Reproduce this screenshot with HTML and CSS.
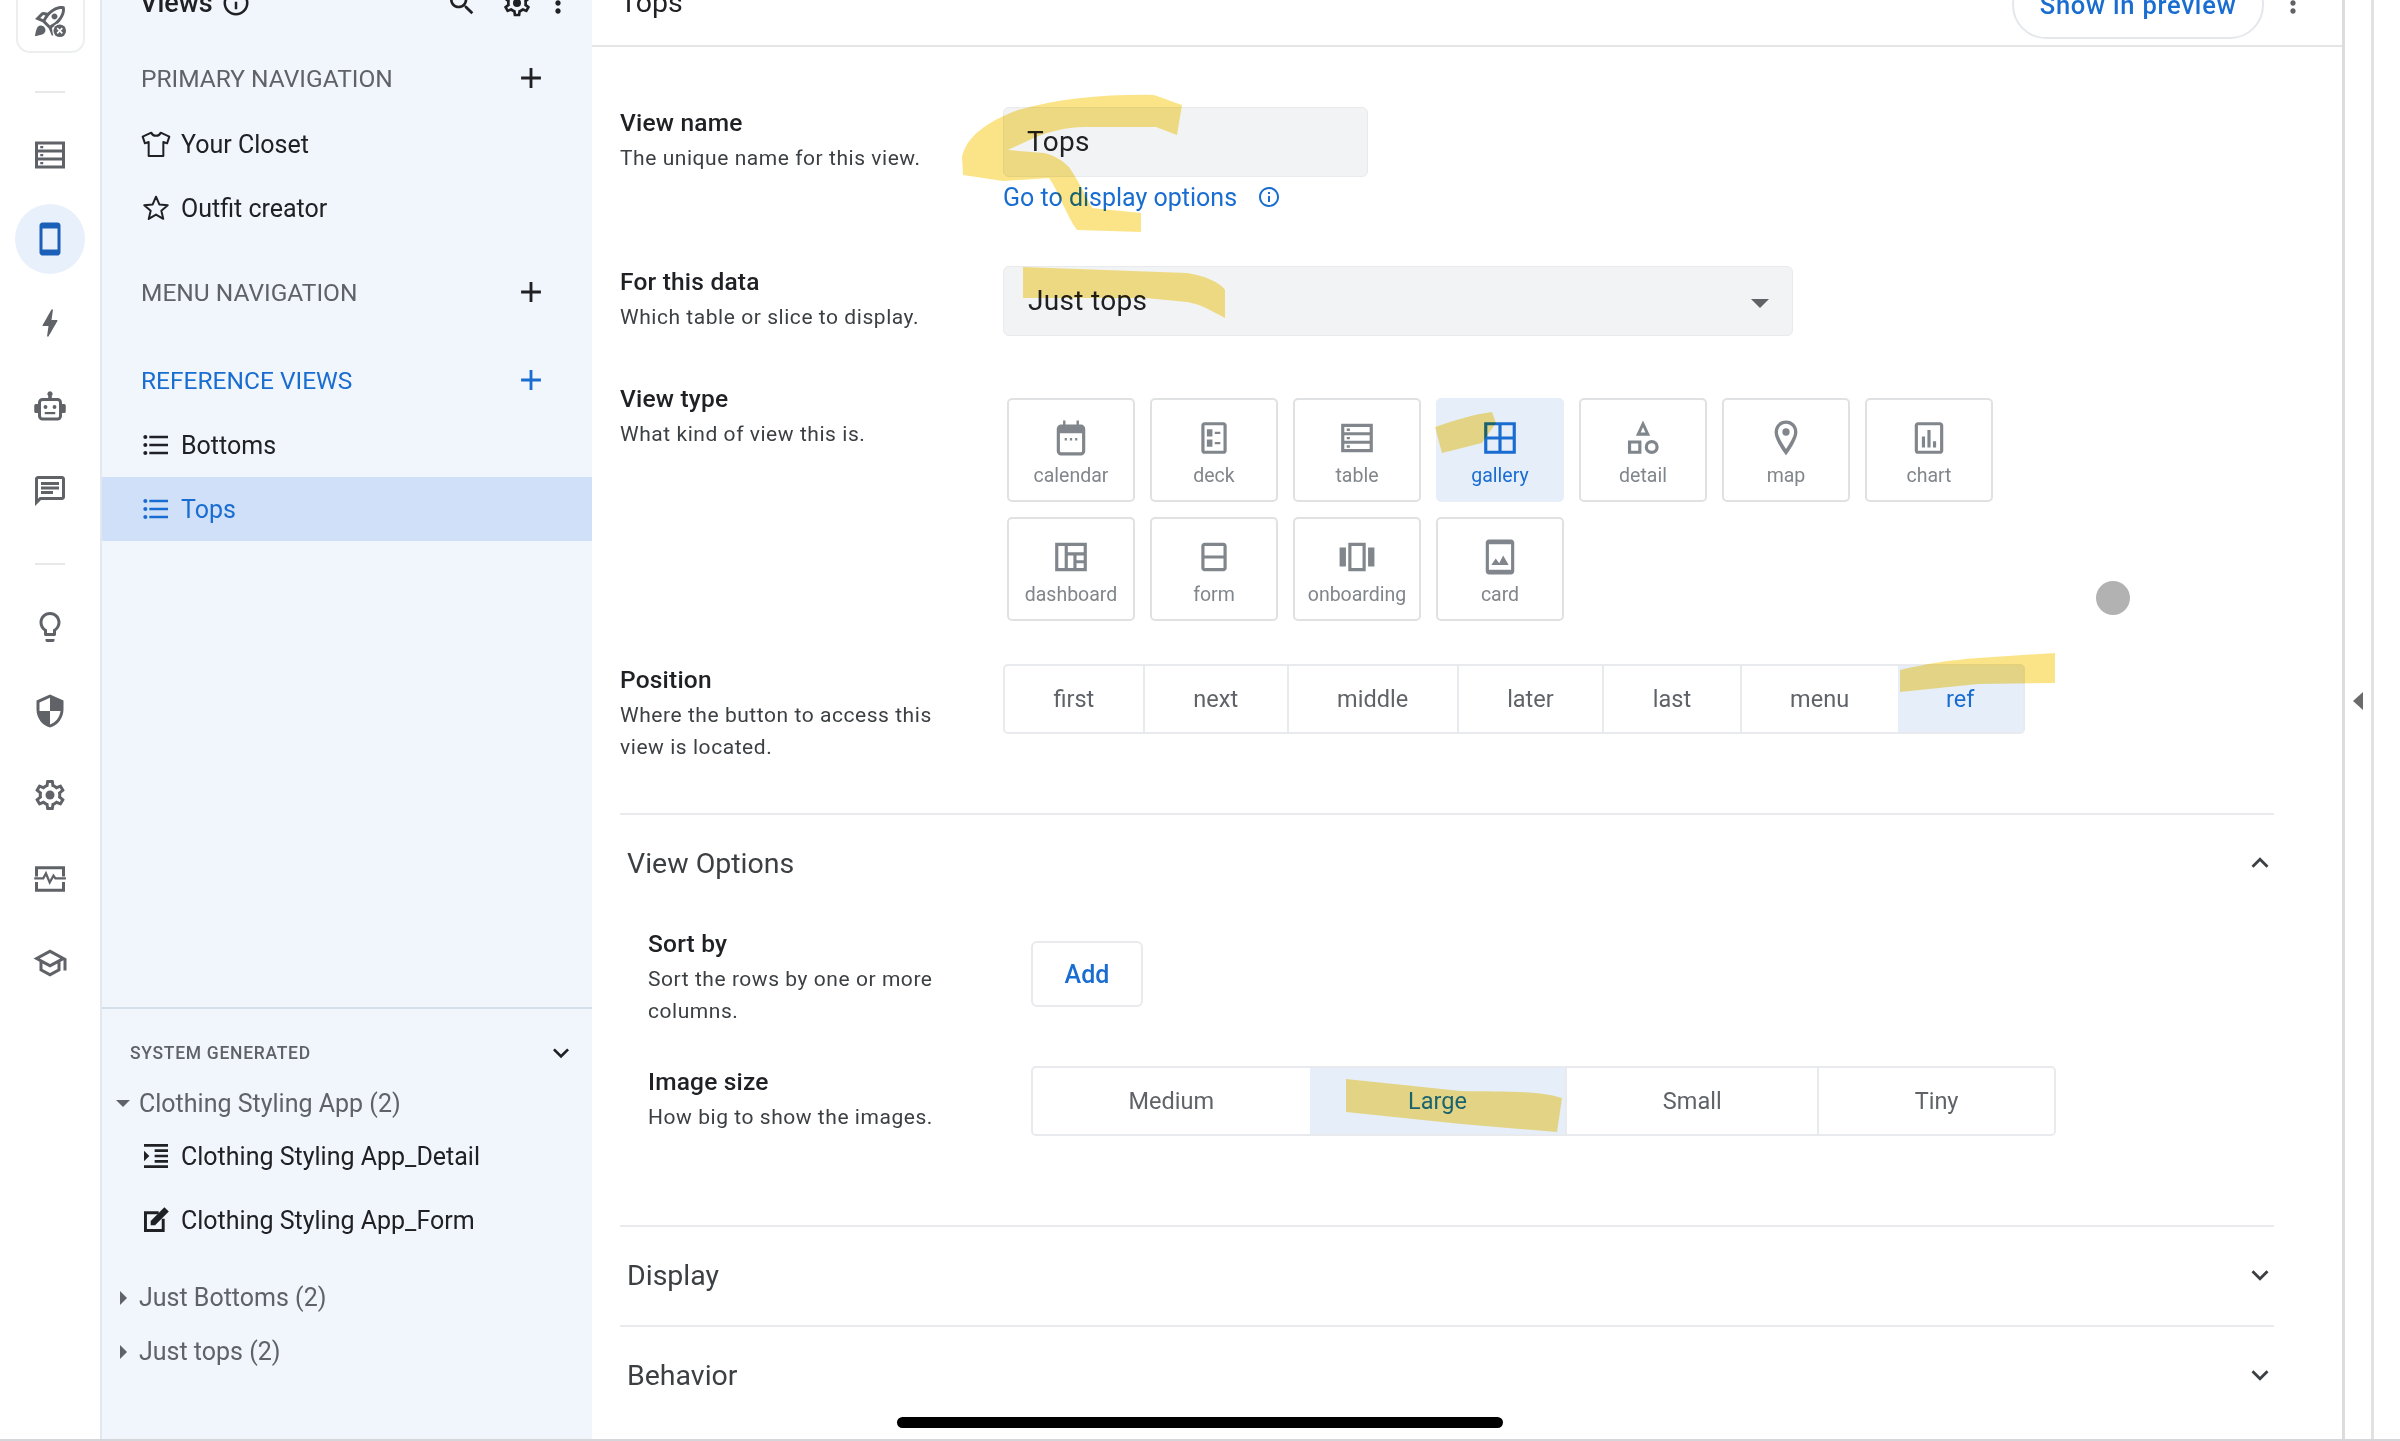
FILE: index.html
```html
<!DOCTYPE html>
<html lang="en">
<head>
    <meta charset="UTF-8">
    <title>Views - Tops</title>
    <link rel="stylesheet" href="styles.css">
</head>
<body>
    <svg class="sprite" xmlns="http://www.w3.org/2000/svg">
        <symbol id="i-add" viewBox="0 0 24 24"><path d="M19 13h-6v6h-2v-6H5v-2h6V5h2v6h6v2z"/></symbol>
        <symbol id="i-list" viewBox="0 0 24 24"><path d="M4 10.500c-.83 0-1.500.67-1.500 1.500s.67 1.500 1.500 1.500 1.500-.67 1.500-1.500-.67-1.500-1.500-1.500zm0-6c-.83 0-1.500.67-1.500 1.500S3.170 7.500 4 7.500 5.500 6.830 5.500 6 4.830 4.500 4 4.500zm0 12c-.83 0-1.500.68-1.500 1.500s.68 1.500 1.500 1.500 1.500-.68 1.500-1.500-.67-1.500-1.500-1.500zM7 19h14v-2H7v2zm0-6h14v-2H7v2zm0-8v2h14V5H7z"/></symbol>
        <symbol id="i-star" viewBox="0 0 24 24"><path fill="none" stroke="currentColor" stroke-width="1.500" stroke-linejoin="round" d="M12 3.500l2.500 5.800 6.300.55-4.800 4.150 1.450 6.150L12 16.900l-5.450 3.250L8 14 3.200 9.850l6.300-.55z"/></symbol>
        <symbol id="i-shirt" viewBox="0 0 24 24"><path fill="none" stroke="currentColor" stroke-width="1.500" stroke-linejoin="round" d="M8.500 3.500 2 6.500l1.700 5 2.800-1V21h11V10.500l2.800 1 1.700-5-6.500-3c-.5 1.600-1.700 2.400-3.500 2.400s-3-.8-3.500-2.400z"/></symbol>
        <symbol id="i-search" viewBox="0 0 24 24"><path d="M15.500 14h-.79l-.28-.27C15.410 12.590 16 11.110 16 9.500 16 5.910 13.090 3 9.500 3S3 5.910 3 9.500 5.910 16 9.500 16c1.610 0 3.090-.59 4.230-1.570l.27.28v.79l5 4.990L20.490 19l-4.990-5zm-6 0C7.010 14 5 11.990 5 9.500S7.010 5 9.500 5 14 7.010 14 9.500 11.990 14 9.500 14z"/></symbol>
        <symbol id="i-more" viewBox="0 0 24 24"><path d="M12 8c1.100 0 2-.9 2-2s-.9-2-2-2-2 .9-2 2 .9 2 2 2zm0 2c-1.100 0-2 .9-2 2s.9 2 2 2 2-.9 2-2-.9-2-2-2zm0 6c-1.100 0-2 .9-2 2s.9 2 2 2 2-.9 2-2-.9-2-2-2z"/></symbol>
        <symbol id="i-gear" viewBox="0 0 24 24"><path d="M19.430 12.980c.04-.32.07-.64.07-.98 0-.34-.03-.66-.07-.98l2.110-1.650c.19-.15.24-.42.12-.64l-2-3.460c-.09-.16-.26-.25-.44-.25-.06 0-.12.01-.17.03l-2.490 1c-.52-.4-1.080-.73-1.690-.98l-.38-2.650C14.460 2.180 14.250 2 14 2h-4c-.25 0-.46.18-.49.42l-.38 2.650c-.61.25-1.170.59-1.690.98l-2.490-1c-.06-.02-.12-.03-.18-.03-.17 0-.34.09-.43.25l-2 3.460c-.13.22-.07.49.12.64l2.110 1.650c-.04.32-.07.65-.07.98 0 .33.03.66.07.98l-2.110 1.650c-.19.15-.24.42-.12.64l2 3.460c.09.16.26.25.44.25.06 0 .12-.01.17-.03l2.490-1c.52.4 1.080.73 1.690.98l.38 2.650c.03.24.24.42.49.42h4c.25 0 .46-.18.49-.42l.38-2.650c.61-.25 1.170-.59 1.690-.98l2.490 1c.06.02.12.03.18.03.17 0 .34-.09.43-.25l2-3.460c.12-.22.07-.49-.12-.64l-2.110-1.650zm-1.980-1.710c.04.31.05.52.05.73 0 .21-.02.43-.05.73l-.14 1.130.89.7 1.080.84-.7 1.210-1.270-.51-1.040-.42-.9.68c-.43.32-.84.56-1.250.73l-1.060.43-.16 1.130-.2 1.350h-1.400l-.19-1.350-.16-1.130-1.060-.43c-.43-.18-.83-.41-1.230-.71l-.91-.7-1.060.43-1.270.51-.7-1.210 1.080-.84.89-.7-.14-1.130c-.03-.31-.05-.54-.05-.74s.02-.43.05-.73l.14-1.130-.89-.7-1.080-.84.7-1.210 1.270.51 1.040.42.9-.68c.43-.32.84-.56 1.250-.73l1.060-.43.16-1.130.2-1.350h1.390l.19 1.350.16 1.130 1.060.43c.43.18.83.41 1.230.71l.91.7 1.060-.43 1.270-.51.7 1.210-1.070.85-.89.7.14 1.130z"/><circle cx="12" cy="12" r="3"/></symbol>
        <symbol id="i-info" viewBox="0 0 24 24"><path d="M11 7h2v2h-2zm0 4h2v6h-2zm1-9C6.480 2 2 6.480 2 12s4.480 10 10 10 10-4.480 10-10S17.520 2 12 2zm0 18c-4.410 0-8-3.590-8-8s3.590-8 8-8 8 3.590 8 8-3.590 8-8 8z"/></symbol>
        <symbol id="i-down" viewBox="0 0 24 24"><path d="M16.590 8.590 12 13.170 7.410 8.590 6 10l6 6 6-6z"/></symbol>
        <symbol id="i-up" viewBox="0 0 24 24"><path d="M12 8l-6 6 1.410 1.410L12 10.830l4.590 4.580L18 14z"/></symbol>
        <symbol id="i-rocket" viewBox="0 0 24 24"><path d="M6 15c-.83 0-1.580.34-2.120.88C2.700 17.060 2 22 2 22s4.940-.7 6.120-1.880A3 3 0 0 0 6 15zm11.420-1.350c6.360-6.360 4.240-11.310 4.240-11.310S16.710.22 10.350 6.580l-2.490-.5a2.070 2.070 0 0 0-1.870.56L2 10.640l5 2.140L11.220 17l2.140 5 3.980-3.980c.46-.46.67-1.130.56-1.870zM7.410 10.830l-1.910-.82 1.970-1.970 1.440.29c-.57.83-1.080 1.700-1.500 2.500zm6.580 7.670-.82-1.910c.8-.42 1.670-.93 2.490-1.500l.29 1.440zM16 12.240c-1.320 1.320-3.380 2.400-4.040 2.730l-2.930-2.930c.32-.65 1.400-2.710 2.730-4.040 4.680-4.680 8.230-3.930 8.230-3.930s.75 3.550-3.990 8.170zM15 11c1.100 0 2-.9 2-2s-.9-2-2-2-2 .9-2 2 .9 2 2 2z"/><circle cx="18.500" cy="18.500" r="5" fill="#fff"/><circle cx="18.500" cy="18.500" r="4.200"/><path d="M16.800 16.800l3.400 3.400m0-3.400-3.400 3.400" stroke="#fff" stroke-width="1.100"/></symbol>
        <symbol id="i-table" viewBox="0 0 24 24"><path d="M2 3h20v18H2zm2 2v3.300h16V5zm0 5.300v3.400h16v-3.400zm0 5.400V19h16v-3.300z"/><path d="M5.500 6h2v1.500h-2zm0 5.300h2v1.500h-2zm0 5.300h2v1.500h-2z"/></symbol>
        <symbol id="i-phone" viewBox="0 0 24 24"><path d="M17 1.010 7 1c-1.100 0-2 .9-2 2v18c0 1.100.9 2 2 2h10c1.100 0 2-.9 2-2V3c0-1.100-.9-1.990-2-1.990zM17 19H7V5h10v14z"/></symbol>
        <symbol id="i-bolt" viewBox="0 0 24 24"><path d="M11 21h-1l1-7H7.500c-.58 0-.57-.32-.38-.66.19-.34.05-.08.07-.12C8.480 10.940 10.420 7.540 13 3h1l-1 7h3.500c.49 0 .56.33.47.51l-.07.15C12.960 17.550 11 21 11 21z"/></symbol>
        <symbol id="i-robot" viewBox="0 0 24 24"><path d="M12 1.500a1.800 1.800 0 0 0-1.200 3.100V6H7a3 3 0 0 0-3 3v1H2.500a1 1 0 0 0-1 1v4a1 1 0 0 0 1 1H4v2a3 3 0 0 0 3 3h10a3 3 0 0 0 3-3v-2h1.500a1 1 0 0 0 1-1v-4a1 1 0 0 0-1-1H20V9a3 3 0 0 0-3-3h-3.800V4.600A1.800 1.800 0 0 0 12 1.500zM7 8h10a1 1 0 0 1 1 1v9a1 1 0 0 1-1 1H7a1 1 0 0 1-1-1V9a1 1 0 0 1 1-1z"/><circle cx="9" cy="12" r="1.300"/><circle cx="15" cy="12" r="1.300"/><path d="M8.500 15.300h7v1.500h-7z"/></symbol>
        <symbol id="i-chat" viewBox="0 0 24 24"><path d="M20 2H4c-1.100 0-2 .9-2 2v18l4-4h14c1.100 0 2-.9 2-2V4c0-1.100-.9-2-2-2zm0 14H5.170L4 17.170V4h16v12zM6 12h8v2H6zm0-3h12v2H6zm0-3h12v2H6z"/></symbol>
        <symbol id="i-bulb" viewBox="0 0 24 24"><path d="M9 21c0 .5.4 1 1 1h4c.6 0 1-.5 1-1v-1H9v1zm3-19C8.100 2 5 5.100 5 9c0 2.400 1.200 4.500 3 5.700V17c0 .5.4 1 1 1h6c.6 0 1-.5 1-1v-2.300c1.800-1.300 3-3.400 3-5.700 0-3.900-3.100-7-7-7zm2.900 11.100-.9.6V16h-4v-2.300l-.9-.6C7.800 12.200 7 10.600 7 9c0-2.800 2.200-5 5-5s5 2.200 5 5c0 1.600-.8 3.200-2.100 4.100z"/></symbol>
        <symbol id="i-shield" viewBox="0 0 24 24"><path d="M12 1 3 5v6c0 5.550 3.840 10.740 9 12 5.160-1.260 9-6.450 9-12V5l-9-4zm0 10.990h7c-.53 4.120-3.280 7.790-7 8.940V12H5V6.300l7-3.110v8.800z"/></symbol>
        <symbol id="i-monitor" viewBox="0 0 24 24"><path d="M2 3.500h20v6.800h-2V5.500H4v4.800H2zm0 10.500h2v4.500h16V14h2v6.500H2z"/><path d="M1.500 11.600h6l1.800-3.300 2.500 6 2.500-4.500 1.300 1.800h7" fill="none" stroke="currentColor" stroke-width="1.500"/></symbol>
        <symbol id="i-school" viewBox="0 0 24 24"><path d="M12 3 1 9l4 2.180v6L12 21l7-3.820v-6l2-1.090V17h2V9L12 3zm6.820 6L12 12.720 5.180 9 12 5.280 18.820 9zM17 15.990l-5 2.730-5-2.730v-3.720L12 15l5-2.730v3.720z"/></symbol>
        <symbol id="i-indent" viewBox="0 0 24 24"><path d="M3 21h18v-2H3v2zM3 8v8l4-4-4-4zm8 9h10v-2H11v2zM3 3v2h18V3H3zm8 6h10V7H11v2zm0 4h10v-2H11v2z"/></symbol>
        <symbol id="i-edit" viewBox="0 0 24 24"><path d="M3 5.500h11v2.200H5.200v11.100h11.100V11h2.200v10H3z"/><path d="M8 16v-3.300L18.300 2.400l3.300 3.300L11.300 16z"/></symbol>
        <symbol id="i-calendar" viewBox="0 0 24 24"><path d="M7 1h1.500v2.500h7V1H17v2.500h1c1.700 0 3 1.300 3 3V20c0 1.700-1.300 3-3 3H6c-1.700 0-3-1.300-3-3V6.500c0-1.700 1.300-3 3-3h1zM5 9v11c0 .6.4 1 1 1h12c.6 0 1-.4 1-1V9z"/><path d="M8 12h1.400v1.500H8zm3.300 0h1.400v1.500h-1.400zm3.300 0H16v1.500h-1.400z"/></symbol>
        <symbol id="i-deck" viewBox="0 0 24 24"><path d="M6 2h12c1.100 0 2 .9 2 2v16c0 1.100-.9 2-2 2H6c-1.100 0-2-.9-2-2V4c0-1.100.9-2 2-2zm0 2v16h12V4z"/><path d="M7.500 6.500h3.500V11H7.500zm0 6.500h3.500v4.500H7.500zM12.500 8H16v1.500h-3.500zm0 6.500H16V16h-3.500z"/></symbol>
        <symbol id="i-gallery" viewBox="0 0 24 24"><path d="M2 2h20v20H2zm2 2v7h7V4zm9 0v7h7V4zM4 13v7h7v-7zm9 0v7h7v-7z"/></symbol>
        <symbol id="i-detail" viewBox="0 0 24 24"><path d="M12 1l4.500 9.500h-9zm0 4.200-1.500 3.300h3zM2.500 13.500h8.500V22H2.500zm2 2V20H9v-4.500zM17.500 13.300a4.400 4.400 0 1 1 0 8.800 4.400 4.400 0 0 1 0-8.800zm0 2a2.400 2.400 0 1 0 0 4.800 2.400 2.400 0 0 0 0-4.800z"/></symbol>
        <symbol id="i-pin" viewBox="0 0 24 24"><path d="M12 1C7.900 1 4.800 4.100 4.800 8.200 4.800 13.700 12 23 12 23s7.200-9.300 7.200-14.800C19.200 4.100 16.100 1 12 1zM6.900 8.200C6.900 5.300 9.100 3 12 3s5.100 2.300 5.100 5.200c0 3-2.900 7.500-5.100 10.700C9.900 15.700 6.900 11.200 6.900 8.200z"/><circle cx="12" cy="8.200" r="2.300"/></symbol>
        <symbol id="i-chart" viewBox="0 0 24 24"><path d="M19 2H5C3.900 2 3 2.900 3 4v16c0 1.100.9 2 2 2h14c1.100 0 2-.9 2-2V4c0-1.100-.9-2-2-2zm0 18H5V4h14zM7.500 11h2v7h-2zm3.500-4h2v11h-2zm3.500 7h2v4h-2z"/></symbol>
        <symbol id="i-dashboard" viewBox="0 0 24 24"><path d="M2 3h20v18H2zm2 2v14h4V5zm6 0v4h10V5zm0 6v8h3.500v-8zm5.500 0v3H20v-3zm0 5v3H20v-3z"/></symbol>
        <symbol id="i-form" viewBox="0 0 24 24"><path d="M6 3h12c1.100 0 2 .9 2 2v14c0 1.100-.9 2-2 2H6c-1.100 0-2-.9-2-2V5c0-1.100.9-2 2-2zm0 2v6h12V5zm0 8v6h12v-6z"/></symbol>
        <symbol id="i-carousel" viewBox="0 0 24 24"><path d="M1 6h4v12H1zm18 0h4v12h-4zM6.500 3h11v18h-11zm2 2v14h7V5z"/></symbol>
        <symbol id="i-card" viewBox="0 0 24 24"><path d="M5 1h14c1.100 0 2 .9 2 2v18c0 1.100-.9 2-2 2H5c-1.100 0-2-.9-2-2V3c0-1.100.9-2 2-2zm0 3v16h14V4z"/><path d="M6.500 17l2.800-4 2.200 3 2.500-5 3.500 6z"/></symbol>
    </svg>

    <div class="app">
        <nav class="rail">
            <div class="rail-logo"><svg class="rail-icon logo-icon"><use href="#i-rocket"/></svg></div>
            <div class="rail-line"></div>
            <div class="rail-item"><svg class="rail-icon"><use href="#i-table"/></svg></div>
            <div class="rail-item rail-active"><span class="rail-circle"><svg class="rail-icon"><use href="#i-phone"/></svg></span></div>
            <div class="rail-item"><svg class="rail-icon"><use href="#i-bolt"/></svg></div>
            <div class="rail-item"><svg class="rail-icon"><use href="#i-robot"/></svg></div>
            <div class="rail-item"><svg class="rail-icon"><use href="#i-chat"/></svg></div>
            <div class="rail-line rail-line-2"></div>
            <div class="rail-item"><svg class="rail-icon"><use href="#i-bulb"/></svg></div>
            <div class="rail-item"><svg class="rail-icon"><use href="#i-shield"/></svg></div>
            <div class="rail-item"><svg class="rail-icon"><use href="#i-gear"/></svg></div>
            <div class="rail-item"><svg class="rail-icon"><use href="#i-monitor"/></svg></div>
            <div class="rail-item"><svg class="rail-icon"><use href="#i-school"/></svg></div>
        </nav>

        <aside class="views-panel">
            <div class="views-top">
                <div class="views-head">
                    <span class="views-title">Views</span>
                    <svg class="head-info"><use href="#i-info"/></svg>
                    <svg class="head-search"><use href="#i-search"/></svg>
                    <svg class="head-gear"><use href="#i-gear"/></svg>
                    <svg class="head-more"><use href="#i-more"/></svg>
                </div>

                <div class="group-title group-primary">PRIMARY NAVIGATION <svg class="add-icon"><use href="#i-add"/></svg></div>
                <div class="view-item"><svg class="item-icon"><use href="#i-shirt"/></svg>Your Closet</div>
                <div class="view-item"><svg class="item-icon"><use href="#i-star"/></svg>Outfit creator</div>

                <div class="group-title group-menu">MENU NAVIGATION <svg class="add-icon"><use href="#i-add"/></svg></div>

                <div class="group-title group-ref">REFERENCE VIEWS <svg class="add-icon"><use href="#i-add"/></svg></div>
                <div class="view-item"><svg class="item-icon"><use href="#i-list"/></svg>Bottoms</div>
                <div class="view-item selected"><svg class="item-icon"><use href="#i-list"/></svg>Tops</div>
            </div>

            <div class="system">
                <div class="system-title">SYSTEM GENERATED <svg class="system-chevron"><use href="#i-down"/></svg></div>
                <div class="tree-head tree-first"><span class="caret caret-open"></span>Clothing Styling App (2)</div>
                <div class="view-item tree-child"><svg class="item-icon"><use href="#i-indent"/></svg>Clothing Styling App_Detail</div>
                <div class="view-item"><svg class="item-icon"><use href="#i-edit"/></svg>Clothing Styling App_Form</div>
                <div class="tree-head tree-second"><span class="caret"></span>Just Bottoms (2)</div>
                <div class="tree-head tree-third"><span class="caret"></span>Just tops (2)</div>
            </div>
        </aside>

        <main class="editor">
            <header class="editor-head">
                <span class="editor-title">Tops</span>
                <button class="preview-btn">Show in preview</button>
                <svg class="editor-more"><use href="#i-more"/></svg>
            </header>

            <div class="editor-body">
                <div class="form-row row-name">
                    <div class="field-label">
                        <div class="field-name">View name</div>
                        <div class="field-desc">The unique name for this view.</div>
                    </div>
                    <div>
                        <div class="text-box name-box">Tops</div>
                        <div class="display-link">Go to display options <svg class="link-info"><use href="#i-info"/></svg></div>
                    </div>
                </div>

                <div class="form-row row-data">
                    <div class="field-label">
                        <div class="field-name">For this data</div>
                        <div class="field-desc">Which table or slice to display.</div>
                    </div>
                    <div class="text-box data-box">Just tops <span class="select-arrow"></span></div>
                </div>

                <div class="form-row row-type">
                    <div class="field-label">
                        <div class="field-name">View type</div>
                        <div class="field-desc">What kind of view this is.</div>
                    </div>
                    <div class="type-grid">
                        <div class="type-tile"><svg class="tile-icon"><use href="#i-calendar"/></svg>calendar</div>
                        <div class="type-tile"><svg class="tile-icon"><use href="#i-deck"/></svg>deck</div>
                        <div class="type-tile"><svg class="tile-icon"><use href="#i-table"/></svg>table</div>
                        <div class="type-tile tile-on"><svg class="tile-icon"><use href="#i-gallery"/></svg>gallery</div>
                        <div class="type-tile"><svg class="tile-icon"><use href="#i-detail"/></svg>detail</div>
                        <div class="type-tile"><svg class="tile-icon"><use href="#i-pin"/></svg>map</div>
                        <div class="type-tile"><svg class="tile-icon"><use href="#i-chart"/></svg>chart</div>
                        <div class="type-tile"><svg class="tile-icon"><use href="#i-dashboard"/></svg>dashboard</div>
                        <div class="type-tile"><svg class="tile-icon"><use href="#i-form"/></svg>form</div>
                        <div class="type-tile"><svg class="tile-icon"><use href="#i-carousel"/></svg>onboarding</div>
                        <div class="type-tile"><svg class="tile-icon"><use href="#i-card"/></svg>card</div>
                    </div>
                </div>

                <div class="form-row row-position">
                    <div class="field-label">
                        <div class="field-name">Position</div>
                        <div class="field-desc">Where the button to access this<br>view is located.</div>
                    </div>
                    <div class="segments">
                        <div class="segment">first</div>
                        <div class="segment">next</div>
                        <div class="segment">middle</div>
                        <div class="segment">later</div>
                        <div class="segment">last</div>
                        <div class="segment">menu</div>
                        <div class="segment segment-on">ref</div>
                    </div>
                </div>

                <section class="panel panel-open">
                    <div class="panel-head">View Options <svg class="panel-chevron"><use href="#i-up"/></svg></div>
                    <div class="form-row row-sort">
                        <div class="field-label">
                            <div class="field-name">Sort by</div>
                            <div class="field-desc">Sort the rows by one or more<br>columns.</div>
                        </div>
                        <button class="add-btn">Add</button>
                    </div>
                    <div class="form-row row-size">
                        <div class="field-label">
                            <div class="field-name">Image size</div>
                            <div class="field-desc">How big to show the images.</div>
                        </div>
                        <div class="segments size-segments">
                            <div class="segment">Medium</div>
                            <div class="segment segment-on">Large</div>
                            <div class="segment">Small</div>
                            <div class="segment">Tiny</div>
                        </div>
                    </div>
                </section>

                <section class="panel">
                    <div class="panel-head">Display <svg class="panel-chevron"><use href="#i-down"/></svg></div>
                </section>
                <section class="panel">
                    <div class="panel-head">Behavior <svg class="panel-chevron"><use href="#i-down"/></svg></div>
                </section>
            </div>
        </main>

        <div class="collapse-strip"><span class="collapse-arrow"></span></div>
        <div class="page-edge"></div>
    </div>

    <!-- marker strokes drawn on top of the screenshot -->
    <svg class="marker" viewBox="0 0 2400 1441" xmlns="http://www.w3.org/2000/svg">
        <path d="M1182 105 1154 95C1110 94 1060 98 1018 110 985 122 966 138 962 157L963 175 1003 181 1049 178C1058 190 1066 215 1077 230L1141 232V213L1092 208C1085 195 1078 180 1069 167 1060 158 1052 155 1044 153L1008 150 1023 143C1045 132 1065 127 1085 127H1156L1177 135z"/>
        <path d="M1023 267 1187 273C1205 276 1220 282 1225 290V318C1210 310 1200 304 1187 302L1146 298 1023 298z"/>
        <path d="M1435 427C1455 420 1475 414 1492 412L1496 423 1482 443 1442 453z"/>
        <path d="M1900 670C1925 664 1950 660 1978 658L2055 653V683L1978 684 1900 692z"/>
        <path d="M1346 1079 1461 1091C1500 1092 1540 1090 1562 1098L1557 1132 1461 1124 1346 1112z"/>
    </svg>
    <div class="touch-dot"></div>
    <div class="home-bar"></div>
</body>
</html>
```

FILE: styles.css
```css
* {
    box-sizing: border-box;
}
html, body {
    margin: 0;
    height: 100%;
    overflow: hidden;
    background: #fff;
}
body {
    font-family: Roboto, "Liberation Sans", sans-serif;
    color: #202124;
}
svg {
    fill: currentColor;
    display: block;
    flex: none;
}
.sprite {
    width: 0;
    height: 0;
    position: absolute;
}
.app {
    display: flex;
    height: 1441px;
    border-bottom: 2px solid #d4d6d9;
    overflow: hidden;
}

/* left icon rail */
.rail {
    width: 100px;
    flex: none;
    display: flex;
    flex-direction: column;
    align-items: center;
    color: #5f6368;
}
.rail-logo {
    width: 69px;
    height: 93px;
    margin-top: -40px;
    padding-top: 41px;
    border: 2px solid #eceef0;
    border-radius: 14px;
    display: flex;
    justify-content: center;
}
.logo-icon {
    width: 32px;
    height: 32px;
}
.rail-line {
    width: 30px;
    height: 2px;
    background: #e6e8ea;
    margin: 38px 0 20px;
}
.rail-line-2 {
    margin: 30px 0 20px;
}
.rail-item {
    height: 84px;
    flex: none;
    display: flex;
    align-items: center;
    justify-content: center;
}
.rail-icon {
    width: 36px;
    height: 36px;
}
.rail-circle {
    width: 70px;
    height: 70px;
    border-radius: 50%;
    background: #e8f0fb;
    color: #1c5fb8;
    display: flex;
    align-items: center;
    justify-content: center;
}

/* views list */
.views-panel {
    width: 492px;
    flex: none;
    background: #f1f5fc;
    border-left: 2px solid #e3e7ee;
    display: flex;
    flex-direction: column;
}
.views-top {
    flex: 1;
}
.views-head {
    height: 86px;
    margin-top: -40px;
    padding-left: 38px;
    display: flex;
    align-items: center;
    position: relative;
}
.views-title {
    font-size: 27px;
    font-weight: 500;
}
.head-info {
    width: 30px;
    height: 30px;
    margin-left: 8px;
}
.head-search {
    width: 32px;
    height: 32px;
    margin-left: 195px;
}
.head-gear {
    width: 32px;
    height: 32px;
    margin-left: 23px;
}
.head-more {
    width: 32px;
    height: 32px;
    margin-left: 9px;
}
.group-title {
    height: 64px;
    padding: 0 44px 0 39px;
    display: flex;
    align-items: center;
    justify-content: space-between;
    font-size: 24.5px;
    color: #5f6368;
}
.group-primary {
    height: 66px;
    padding-bottom: 2px;
}
.group-menu {
    margin-top: 20px;
}
.group-ref {
    margin-top: 24px;
    height: 65px;
    padding-bottom: 1px;
    color: #1a6dd0;
}
.add-icon {
    width: 34px;
    height: 34px;
    color: #202124;
}
.group-ref .add-icon {
    color: #1a6dd0;
}
.view-item {
    height: 64px;
    padding-left: 38px;
    display: flex;
    align-items: center;
    font-size: 25px;
}
.view-item.selected {
    background: #cfe0f8;
    color: #1a6dd0;
}
.item-icon {
    width: 32px;
    height: 32px;
    margin-right: 9px;
}
.system {
    height: 432px;
    flex: none;
    border-top: 2px solid #d5dfec;
    padding-top: 28px;
}
.system-title {
    padding: 0 15px 0 28px;
    height: 32px;
    display: flex;
    align-items: center;
    justify-content: space-between;
    font-size: 17.5px;
    font-weight: 500;
    letter-spacing: .7px;
    color: #5f6368;
}
.system-chevron {
    width: 32px;
    height: 32px;
    color: #202124;
}
.tree-head {
    height: 50px;
    padding-left: 37px;
    display: flex;
    align-items: center;
    font-size: 25px;
    color: #5f6368;
    position: relative;
}
.tree-first {
    margin-top: 9px;
}
.tree-child {
    margin-top: -4px;
}
.tree-second {
    margin-top: 20px;
}
.tree-third {
    margin-top: 4px;
}
.caret {
    position: absolute;
    left: 18px;
    top: 19px;
    border-left: 7px solid #5f6368;
    border-top: 7px solid transparent;
    border-bottom: 7px solid transparent;
}
.caret-open {
    left: 14px;
    top: 22px;
    border-top: 7px solid #5f6368;
    border-left: 7px solid transparent;
    border-right: 7px solid transparent;
    border-bottom: 0;
}

/* editor */
.editor {
    width: 1753px;
    flex: none;
    border-right: 3px solid #dcdcdc;
}
.editor-head {
    height: 87px;
    margin-top: -40px;
    padding-left: 28px;
    border-bottom: 2px solid #e4e5e7;
    display: flex;
    align-items: center;
    position: relative;
}
.editor-title {
    font-size: 28.5px;
}
.preview-btn {
    margin-left: auto;
    margin-right: 13px;
    width: 252px;
    height: 68px;
    margin-top: 4px;
    background: #fff;
    border: 2px solid #e4e7eb;
    border-radius: 34px;
    font-family: inherit;
    font-size: 25.5px;
    font-weight: 500;
    letter-spacing: .8px;
    color: #1a6dd0;
}
.editor-more {
    width: 32px;
    height: 32px;
    margin-right: 33px;
    color: #5f6368;
}
.editor-body {
    padding: 60px 68px 0 28px;
}
.form-row {
    display: grid;
    grid-template-columns: 383px 1fr;
    align-items: start;
}
.field-name {
    font-size: 24.5px;
    font-weight: 500;
    line-height: 32px;
    letter-spacing: .2px;
}
.field-desc {
    font-size: 21px;
    line-height: 32px;
    margin-top: 3px;
    letter-spacing: .55px;
    color: #3c4043;
}
.text-box {
    height: 70px;
    background: #f1f3f4;
    border: 1px solid #e8eaed;
    border-radius: 6px;
    display: flex;
    align-items: center;
    padding: 0 0 2px 23px;
    font-size: 28px;
    letter-spacing: .3px;
}
.name-box {
    width: 365px;
}
.data-box {
    width: 790px;
    position: relative;
    padding-left: 24px;
}
.select-arrow {
    position: absolute;
    right: 23px;
    top: 32px;
    border-top: 9px solid #5f6368;
    border-left: 9px solid transparent;
    border-right: 9px solid transparent;
}
.display-link {
    height: 40px;
    display: flex;
    align-items: center;
    font-size: 25px;
    color: #1a6dd0;
}
.link-info {
    width: 24px;
    height: 24px;
    margin-left: 20px;
}
.row-data {
    margin-top: 49px;
}
.row-type {
    margin-top: 47px;
}
.row-position {
    margin-top: 43px;
}
.type-grid {
    margin: 15px 0 0 4px;
    display: grid;
    grid-template-columns: repeat(7, 128px);
    grid-auto-rows: 104px;
    gap: 15px;
}
.type-tile {
    border: 2px solid #e0e1e3;
    border-radius: 5px;
    display: flex;
    flex-direction: column;
    align-items: center;
    padding-top: 19px;
    font-size: 19.5px;
    color: #80868b;
}
.tile-icon {
    width: 38px;
    height: 38px;
    margin-bottom: 7px;
}
.tile-on {
    background: #e6eefa;
    border-color: #e6eefa;
    color: #1a6dd0;
}
.segments {
    display: inline-flex;
    justify-self: start;
    height: 70px;
    border: 2px solid #e8eaed;
    border-radius: 5px;
}
.segment {
    display: flex;
    align-items: center;
    padding: 0 48.5px;
    font-size: 23.5px;
    color: #5f6368;
    border-left: 2px solid #e8eaed;
}
.segment:first-child {
    border-left: 0;
}
.segment-on {
    background: #e6eefa;
    color: #1a6dd0;
    border-left: 0;
}
.panel {
    border-top: 2px solid #e8eaed;
}
.panel-open {
    margin-top: 50px;
    height: 412px;
}
.panel-head {
    height: 98px;
    padding: 0 0 2px 7px;
    display: flex;
    align-items: center;
    justify-content: space-between;
    font-size: 28.5px;
    color: #3c4043;
}
.panel-chevron {
    width: 34px;
    height: 34px;
    color: #3c4043;
    margin-right: -3px;
}
.row-sort {
    padding-left: 28px;
    margin-top: 15px;
}
.add-btn {
    width: 112px;
    height: 66px;
    margin-top: 13px;
    background: #fff;
    border: 2px solid #e8eaed;
    border-radius: 6px;
    font-family: inherit;
    font-size: 25px;
    font-weight: 500;
    color: #1a6dd0;
}
.row-size {
    padding-left: 28px;
    margin-top: 39px;
}
.size-segments .segment {
    padding: 0 95.5px;
}
.size-segments .segment-on {
    padding: 0 98.5px;
}

/* strip on the right of the editor */
.collapse-strip {
    width: 26px;
    flex: none;
    display: flex;
    align-items: center;
    justify-content: center;
    padding-bottom: 37px;
}
.collapse-arrow {
    border-right: 10px solid #6b6b6b;
    border-top: 9px solid transparent;
    border-bottom: 9px solid transparent;
}
.page-edge {
    flex: 1;
    border-left: 3px solid #e2e2e2;
}

/* things lying over the page */
.marker {
    position: absolute;
    left: 0;
    top: 0;
    width: 2400px;
    height: 1441px;
    fill: #fbe072;
    opacity: .85;
    mix-blend-mode: multiply;
    pointer-events: none;
}
.touch-dot {
    position: absolute;
    left: 2096px;
    top: 581px;
    width: 34px;
    height: 34px;
    border-radius: 50%;
    background: #b2b2b2;
}
.home-bar {
    position: absolute;
    left: 897px;
    top: 1417px;
    width: 606px;
    height: 11px;
    border-radius: 6px;
    background: #000;
}
```
